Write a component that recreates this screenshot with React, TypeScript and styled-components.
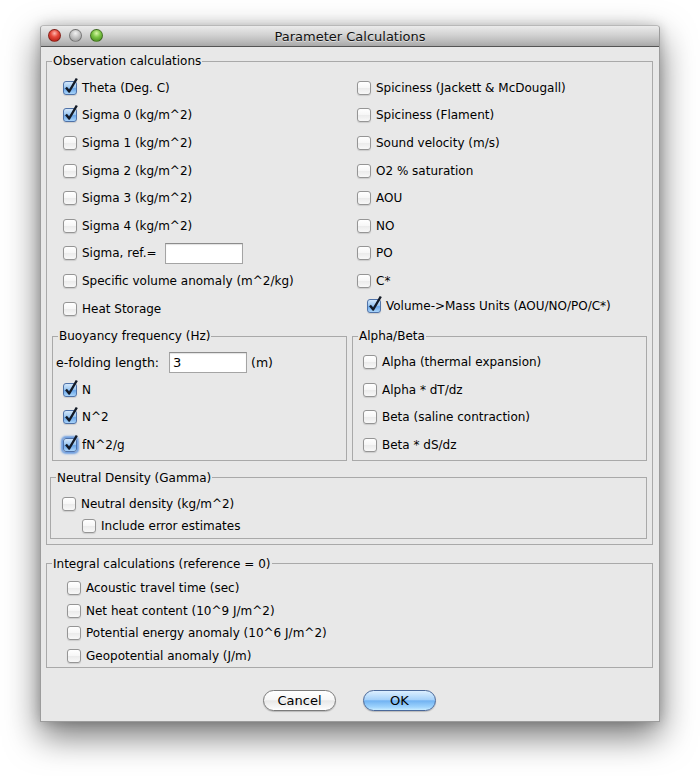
import styled, { createGlobalStyle } from 'styled-components';

const GlobalStyle = createGlobalStyle`
  html, body {
    margin: 0;
    padding: 0;
    background: #ffffff;
  }
  body {
    font-family: "DejaVu Sans", "Liberation Sans", sans-serif;
    font-size: 12px;
    color: #000;
  }
`;

interface CheckProps {
  label: string;
  checked?: boolean;
  focus?: boolean;
  h?: number;
  indent?: number;
}

// aqua style checkbox with its label
function Check({ label, checked, focus, h = 27.6, indent = 0 }: CheckProps) {
  return (
    <Row $h={h} $indent={indent}>
      <Box $checked={checked} $focus={focus}>
        {checked && (
          <Tick viewBox="0 0 16 18">
            <path d="M3 10.5 L6.2 14.5 L13.8 1.5" />
          </Tick>
        )}
      </Box>
      <span>{label}</span>
    </Row>
  );
}

const leftRows = [
  { label: 'Theta (Deg. C)', checked: true },
  { label: 'Sigma 0 (kg/m^2)', checked: true },
  { label: 'Sigma 1 (kg/m^2)' },
  { label: 'Sigma 2 (kg/m^2)' },
  { label: 'Sigma 3 (kg/m^2)' },
  { label: 'Sigma 4 (kg/m^2)' },
];

const rightRows = [
  'Spiciness (Jackett & McDougall)',
  'Spiciness (Flament)',
  'Sound velocity (m/s)',
  'O2 % saturation',
  'AOU',
  'NO',
  'PO',
  'C*',
];

const alphaRows = [
  'Alpha (thermal expansion)',
  'Alpha * dT/dz',
  'Beta (saline contraction)',
  'Beta * dS/dz',
];

const integralRows = [
  'Acoustic travel time (sec)',
  'Net heat content (10^9 J/m^2)',
  'Potential energy anomaly (10^6 J/m^2)',
  'Geopotential anomaly (J/m)',
];

function App() {
  return (
    <Page>
      <GlobalStyle />
      <Window>
        <TitleBar>
          <Lights>
            <Light $color="red" />
            <Light $color="gray" />
            <Light $color="green" />
          </Lights>
          <Title>Parameter Calculations</Title>
        </TitleBar>
        <Body>
          <Group>
            <Legend>Observation calculations</Legend>
            <Columns>
              <Column>
                {leftRows.map((r) => (
                  <Check key={r.label} label={r.label} checked={r.checked} />
                ))}
                <Row $h={27.6} $indent={0}>
                  <Box />
                  <span>Sigma, ref.=</span>
                  <Field $w={78} $ml={3} />
                </Row>
                <Check label="Specific volume anomaly (m^2/kg)" />
                <Check label="Heat Storage" />
              </Column>
              <Column>
                {rightRows.map((r) => (
                  <Check key={r} label={r} />
                ))}
                <Check label="Volume->Mass Units (AOU/NO/PO/C*)" checked indent={10} h={22} />
              </Column>
            </Columns>
            <SubGrid>
              <SubGroup>
                <Legend>Buoyancy frequency (Hz)</Legend>
                <SubBody $pl={10}>
                  <FoldRow>
                    <span>e-folding length:</span>
                    <Field $w={78} $ml={6}>3</Field>
                    <span>(m)</span>
                  </FoldRow>
                  <Check label="N" checked />
                  <Check label="N^2" checked />
                  <Check label="fN^2/g" checked focus />
                </SubBody>
              </SubGroup>
              <SubGroup>
                <Legend>Alpha/Beta</Legend>
                <SubBody $pl={10}>
                  {alphaRows.map((r) => (
                    <Check key={r} label={r} />
                  ))}
                </SubBody>
              </SubGroup>
            </SubGrid>
            <NeutralGroup>
              <Legend>Neutral Density (Gamma)</Legend>
              <NeutralBody>
                <Check label="Neutral density (kg/m^2)" h={22} />
                <Check label="Include error estimates" h={22} indent={20} />
              </NeutralBody>
            </NeutralGroup>
          </Group>
          <IntegralGroup>
            <Legend>Integral calculations (reference = 0)</Legend>
            <IntegralBody>
              {integralRows.map((r) => (
                <Check key={r} label={r} h={22.7} />
              ))}
            </IntegralBody>
          </IntegralGroup>
          <Buttons>
            <PushButton>Cancel</PushButton>
            <PushButton $primary>OK</PushButton>
          </Buttons>
        </Body>
      </Window>
    </Page>
  );
}

const Page = styled.div`
  padding: 25px 0 0 40px;
  width: 700px;
  height: 776px;
  box-sizing: border-box;
  overflow: hidden;
`;

const Window = styled.div`
  width: 620px;
  height: 697px;
  box-sizing: border-box;
  border: 1px solid #9c9c9c;
  border-top-color: #b8b8b8;
  border-radius: 4px 4px 0 0;
  background: #e8e8e8;
  display: flex;
  flex-direction: column;
  box-shadow: 0 14px 34px rgba(0, 0, 0, 0.55), 0 0 12px rgba(0, 0, 0, 0.18);
`;

const TitleBar = styled.div`
  position: relative;
  height: 20px;
  flex: none;
  border-bottom: 1px solid #545454;
  border-radius: 3px 3px 0 0;
  background: linear-gradient(#ebebeb, #d2d2d2 45%, #b9b9b9 80%, #a8a8a8);
  display: flex;
  align-items: center;
  justify-content: center;
`;

const Lights = styled.div`
  position: absolute;
  left: 7px;
  top: 3px;
  display: flex;
  gap: 8px;
`;

const lightColors: Record<string, string> = {
  red: 'radial-gradient(circle at 50% 30%, #ffb7ae 0%, #e64a3c 40%, #a5140c 100%)',
  gray: 'radial-gradient(circle at 50% 30%, #f2f2f2 0%, #c4c4c4 45%, #909090 100%)',
  green: 'radial-gradient(circle at 50% 30%, #d9f7a7 0%, #7cc545 42%, #3f7f17 100%)',
};

const Light = styled.span<{ $color: string }>`
  width: 13px;
  height: 13px;
  border-radius: 50%;
  box-sizing: border-box;
  border: 1px solid rgba(0, 0, 0, 0.35);
  background: ${(p) => lightColors[p.$color]};
`;

const Title = styled.div`
  font-size: 13px;
  color: #111;
  text-shadow: 0 1px 0 rgba(255, 255, 255, 0.5);
`;

const Body = styled.div`
  flex: 1;
  padding: 6px 6px 0 5px;
  display: flex;
  flex-direction: column;
`;

const Group = styled.fieldset`
  margin: 0;
  padding: 5px 0 5px 0;
  min-width: 0;
  border: 1px solid #a9a9a9;
`;

const Legend = styled.legend`
  margin-left: 5px;
  padding: 0 1px;
  line-height: 16px;
  font-size: 12px;
`;

const Columns = styled.div`
  display: grid;
  grid-template-columns: 294px 1fr;
`;

const Column = styled.div`
  padding-left: 16px;
  display: flex;
  flex-direction: column;
`;

const Row = styled.label<{ $h: number; $indent: number }>`
  height: ${(p) => p.$h}px;
  padding-left: ${(p) => p.$indent}px;
  display: flex;
  align-items: center;
  gap: 5px;
  white-space: nowrap;
`;

const Box = styled.span<{ $checked?: boolean; $focus?: boolean }>`
  position: relative;
  flex: none;
  width: 14px;
  height: 14px;
  box-sizing: border-box;
  border-radius: 3px;
  border: 1px solid ${(p) => (p.$checked ? '#4f72a8' : '#959595')};
  background: ${(p) =>
    p.$checked
      ? 'linear-gradient(#d3e7fb, #9cc7f0 45%, #6aa6e8 55%, #a9d4fa)'
      : 'linear-gradient(#ffffff, #f6f6f6 50%, #ebebeb 51%, #f8f8f8)'};
  box-shadow: ${(p) =>
    p.$focus ? '0 0 2px 2px #6d9ee0' : '0 1px 1px rgba(0, 0, 0, 0.12)'};
`;

const Tick = styled.svg`
  position: absolute;
  left: -1px;
  top: -5px;
  width: 16px;
  height: 18px;
  overflow: visible;
  fill: none;
  stroke: #131a26;
  stroke-width: 2.4;
  stroke-linejoin: round;
`;

const Field = styled.span<{ $w: number; $ml: number }>`
  width: ${(p) => p.$w}px;
  height: 21px;
  margin-left: ${(p) => p.$ml}px;
  box-sizing: border-box;
  border: 1px solid #a4a4a4;
  border-top-color: #8c8c8c;
  background: #ffffff;
  box-shadow: inset 0 1px 1px rgba(0, 0, 0, 0.12);
  padding: 0 3px;
  font-size: 13px;
  line-height: 19px;
`;

const SubGrid = styled.div`
  margin-top: 6px;
  padding: 0 5px;
  display: grid;
  grid-template-columns: 1fr 1fr;
  gap: 5px;
`;

const SubGroup = styled.fieldset`
  margin: 0;
  padding: 4px 0 1px 0;
  min-width: 0;
  border: 1px solid #a9a9a9;
`;

const SubBody = styled.div<{ $pl: number }>`
  padding-left: ${(p) => p.$pl}px;
  display: flex;
  flex-direction: column;
`;

const FoldRow = styled.div`
  height: 27.6px;
  margin-left: -7px;
  display: flex;
  align-items: center;
  gap: 4px;
  white-space: nowrap;
  font-size: 12.5px;
`;

const NeutralGroup = styled.fieldset`
  margin: 9px 5px 0 3px;
  padding: 7px 0 1px 0;
  min-width: 0;
  border: 1px solid #a9a9a9;
`;

const NeutralBody = styled.div`
  padding-left: 11px;
  display: flex;
  flex-direction: column;
`;

const IntegralGroup = styled.fieldset`
  margin: 11px 0 0 0;
  padding: 5px 0 0 0;
  min-width: 0;
  border: 1px solid #a9a9a9;
`;

const IntegralBody = styled.div`
  padding-left: 20px;
  display: flex;
  flex-direction: column;
`;

const Buttons = styled.div`
  margin-top: 22px;
  display: flex;
  justify-content: center;
  gap: 27px;
`;

const PushButton = styled.button<{ $primary?: boolean }>`
  width: 73px;
  height: 21px;
  padding: 0;
  border-radius: 11px;
  font-family: "DejaVu Sans", "Liberation Sans", sans-serif;
  font-size: 13px;
  color: #000;
  border: 1px solid ${(p) => (p.$primary ? '#4a6899' : '#7b7b7b')};
  background: ${(p) =>
    p.$primary
      ? 'linear-gradient(#dcefff, #a7d2fa 45%, #72b3f2 52%, #9fd4fd 85%, #c9ecff)'
      : 'linear-gradient(#ffffff, #f7f7f7 45%, #e8e8e8 52%, #f6f6f6 85%, #ffffff)'};
  box-shadow: 0 1px 1px rgba(0, 0, 0, 0.2);
`;

export default App;
